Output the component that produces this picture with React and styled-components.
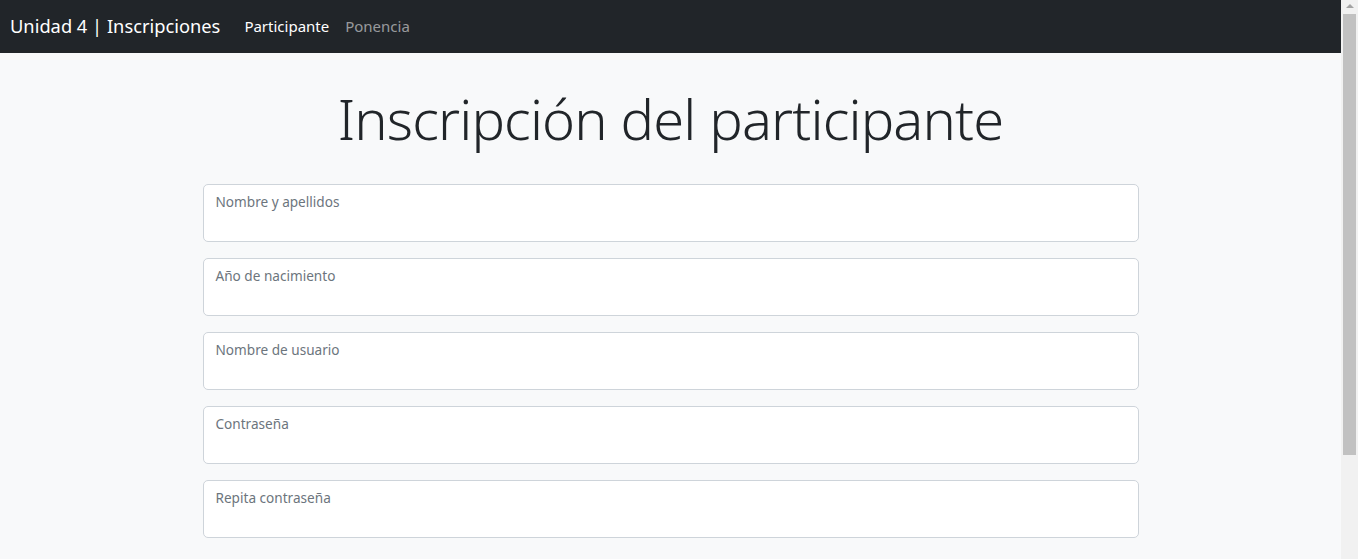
import React from "react";
import styled, { createGlobalStyle } from "styled-components";

const GlobalStyle = createGlobalStyle`
  html, body {
    margin: 0;
    padding: 0;
    height: 100%;
    overflow: hidden;
    background: #f8f9fa;
  }
  body {
    font-family: "Noto Sans", "Open Sans", sans-serif;
    color: #212529;
  }
`;

const Shell = styled.div`
  display: flex;
  height: 100vh;
`;

const Viewport = styled.div`
  flex: 1;
  display: flex;
  flex-direction: column;
  min-width: 0;
`;

const Navbar = styled.nav`
  height: 53px;
  background: #212529;
  display: flex;
  align-items: center;
  padding: 0 10px;
  gap: 16px;
`;

const Brand = styled.span`
  font-size: 18.3px;
  color: #fff;
  padding-bottom: 2px;
  margin-right: 8px;
`;

const NavLinks = styled.div`
  display: flex;
  gap: 16px;
`;

const NavLink = styled.a`
  font-size: 15px;
  color: ${(p) => (p.$active ? "#fff" : "rgba(255,255,255,0.55)")};
  text-decoration: none;
  padding-bottom: 2px;
`;

const Main = styled.main`
  width: 936px;
  margin: 0 auto;
`;

const Title = styled.h1`
  font-size: 56px;
  font-weight: 300;
  line-height: 1.2;
  text-align: center;
  margin: 32px 0 32px;
  letter-spacing: -0.85px;
`;

const Form = styled.form`
  display: flex;
  flex-direction: column;
  gap: 16px;
`;

const Field = styled.div`
  height: 58px;
  box-sizing: border-box;
  background: #fff;
  border: 1px solid #ced4da;
  border-radius: 5px;
  padding: 5px 12px;
`;

const Label = styled.label`
  font-size: 13.6px;
  color: #6c757d;
  line-height: 1.5;
`;

const Scrollbar = styled.div`
  width: 17px;
  background: #f1f1f1;
  display: flex;
  flex-direction: column;
  align-items: center;
`;

const ArrowUp = styled.div`
  width: 0;
  height: 0;
  margin-top: 4px;
  border-left: 4px solid transparent;
  border-right: 4px solid transparent;
  border-bottom: 4px solid #a3a3a3;
`;

const Thumb = styled.div`
  width: 13px;
  height: 441px;
  margin-top: 6px;
  background: #c1c1c1;
`;

const fields = [
  "Nombre y apellidos",
  "Año de nacimiento",
  "Nombre de usuario",
  "Contraseña",
  "Repita contraseña",
];

export default function App() {
  return (
    <>
      <GlobalStyle />
      <Shell>
        <Viewport>
          <Navbar>
            <Brand>Unidad 4 | Inscripciones</Brand>
            <NavLinks>
              <NavLink $active>Participante</NavLink>
              <NavLink>Ponencia</NavLink>
            </NavLinks>
          </Navbar>
          <Main>
            <Title>Inscripción del participante</Title>
            <Form>
              {fields.map((f) => (
                <Field key={f}>
                  <Label>{f}</Label>
                </Field>
              ))}
            </Form>
          </Main>
        </Viewport>
        <Scrollbar>
          <ArrowUp />
          <Thumb />
        </Scrollbar>
      </Shell>
    </>
  );
}
